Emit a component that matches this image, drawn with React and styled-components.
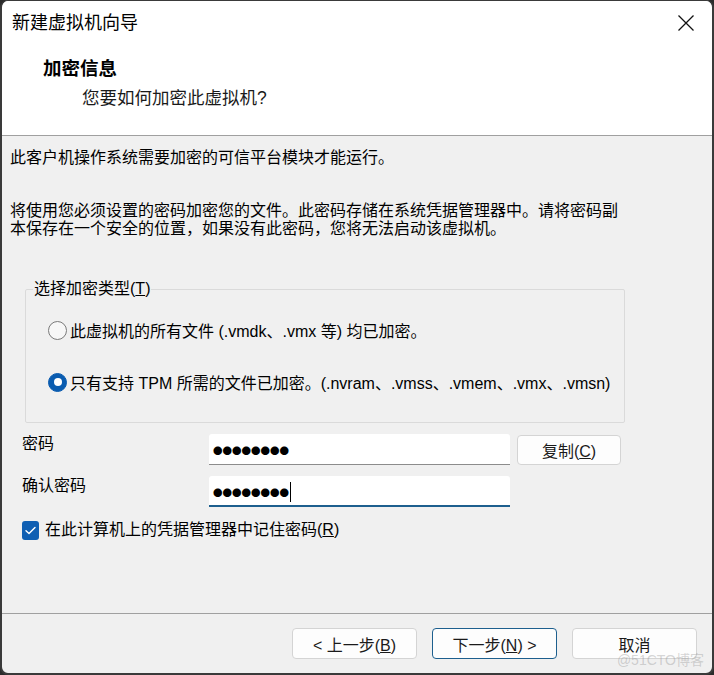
import * as React from "react";
import styled, { createGlobalStyle } from "styled-components";

const GlobalStyle = createGlobalStyle`
    html, body {
        margin: 0;
        padding: 0;
        background: #2b2b2b;
    }
    body {
        font-family: "Liberation Sans", "Noto Sans CJK SC", sans-serif;
        color: #000;
    }
`;

const Window =
    styled.div`
        position: relative;
        box-sizing: border-box;
        width: 714px;
        height: 675px;
        display: flex;
        flex-direction: column;
        background: #f0f0f0;
        border: 1px solid #3a3a3a;
        border-width: 1px 2px 2px 2px;
        border-radius: 8px;
        overflow: hidden;
    `;

const Top =
    styled.div`
        background: #fff;
        border-bottom: 1px solid #a0a0a0;
        height: 135px;
        box-sizing: border-box;
        flex: none;
    `;

const TitleBar =
    styled.div`
        height: 43px;
        display: flex;
        align-items: center;
        justify-content: space-between;
        padding: 0 16px 0 10px;
    `;

const Title =
    styled.span`
        font-size: 18px;
        line-height: 20px;
        padding-top: 1px;
    `;

const CloseButton =
    styled.span`
        display: flex;
        width: 18px;
        height: 18px;
        margin-right: 1px;
    `;

const Header =
    styled.div`
        padding: 13px 0 0 41px;
    `;

const Heading =
    styled.div`
        font-size: 18.5px;
        font-weight: 700;
        line-height: 24px;
    `;

const SubHeading =
    styled.div`
        font-size: 17.5px;
        line-height: 24px;
        margin: 5px 0 0 39px;
        color: #1a1a1a;
    `;

const Body =
    styled.div`
        flex: 1;
        padding: 12px 10px 0 8px;
        font-size: 16px;
    `;

const Paragraph =
    styled.p`
        margin: 0;
        line-height: ${p => p.$tight ? '18px' : '20px'};
        & + & {
            margin-top: 34px;
        }
    `;

const GroupBox =
    styled.fieldset`
        margin: 41px 0 0 15px;
        width: 600px;
        box-sizing: border-box;
        border: 1px solid #dadada;
        border-radius: 2px;
        padding: 19px 0 28px 22px;
    `;

const Legend =
    styled.legend`
        font-size: 16px;
        line-height: 20px;
        padding: 0 1px;
        margin-left: -15px;
    `;

const RadioRow =
    styled.div`
        display: flex;
        align-items: center;
        gap: 3px;
        height: 24px;
        & + & {
            margin-top: 28px;
        }
    `;

const RadioMark =
    styled.span`
        box-sizing: border-box;
        width: 19px;
        height: 19px;
        border-radius: 50%;
        flex: none;
        display: flex;
        align-items: center;
        justify-content: center;
        background: ${p => p.$checked ? '#0a5cb0' : '#f7f7f7'};
        border: 1px solid ${p => p.$checked ? '#0a5cb0' : '#7a7a7a'};

        &::after {
            content: '';
            display: ${p => p.$checked ? 'block' : 'none'};
            width: 8px;
            height: 8px;
            border-radius: 50%;
            background: #fff;
        }
    `;

const FormGrid =
    styled.div`
        display: grid;
        grid-template-columns: 180px 301px 104px;
        column-gap: 7px;
        row-gap: 11px;
        margin: 11px 0 0 12px;
        align-items: start;
    `;

const FieldLabel =
    styled.span`
        line-height: 20px;
    `;

const PasswordBox =
    styled.div`
        box-sizing: border-box;
        height: 31px;
        background: #fff;
        border-radius: 3px 3px 0 0;
        border-bottom: ${p => p.$focused ? '2px solid #1d5f8e' : '1px solid #8c8c8c'};
        display: flex;
        align-items: center;
        padding: ${p => p.$focused ? '2px 0 0 4px' : '1px 0 0 4px'};
    `;

const Dots =
    styled.span`
        font-family: "Noto Sans CJK SC", sans-serif;
        font-size: 9.5px;
        line-height: 12px;
    `;

const Caret =
    styled.span`
        width: 1px;
        height: 20px;
        background: #000;
        margin-left: 1px;
    `;

const CopyButton =
    styled.button`
        box-sizing: border-box;
        height: 30px;
        margin-top: 1px;
        font: inherit;
        font-size: 16px;
        background: #fdfdfd;
        border: 1px solid #d4d4d4;
        border-radius: 4px;
        color: #1a1a1a;
        padding: 0;
    `;

const CheckRow =
    styled.div`
        display: flex;
        align-items: center;
        gap: 6px;
        margin: 13px 0 0 12px;
        line-height: 20px;
    `;

const CheckMark =
    styled.span`
        width: 17px;
        height: 19px;
        border-radius: 3px;
        background: #0f5fb3;
        display: flex;
        align-items: center;
        justify-content: center;
    `;

const Footer =
    styled.div`
        box-sizing: border-box;
        flex: none;
        height: 60px;
        border-top: 1px solid #a0a0a0;
        display: flex;
        justify-content: flex-end;
        align-items: flex-start;
        gap: 15px;
        padding: 14px 15px 0 0;
    `;

const WizardButton =
    styled.button`
        box-sizing: border-box;
        width: 125px;
        height: 31px;
        font: inherit;
        font-size: 16px;
        color: #1a1a1a;
        background: #fdfdfd;
        border: 1px solid ${p => p.$primary ? '#1d5f8e' : '#d4d4d4'};
        border-radius: 4px;
        padding: 0;
    `;

const Watermark =
    styled.span`
        position: absolute;
        right: 8px;
        bottom: 4px;
        font-size: 14px;
        color: rgba(150, 150, 150, 0.4);
        pointer-events: none;
    `;

const CloseIcon = () =>
    <svg width="18" height="18" viewBox="0 0 18 18">
        <path d="M1.5 1.5 L16.5 16.5 M16.5 1.5 L1.5 16.5" stroke="#111" strokeWidth="1.3" fill="none" />
    </svg>;

const CheckIcon = () =>
    <svg width="13" height="13" viewBox="0 0 13 13">
        <path d="M2 6.8 L5 9.6 L11 3.4" stroke="#fff" strokeWidth="1.4" fill="none" strokeLinecap="round" strokeLinejoin="round" />
    </svg>;

const App = () => {
    const dots = "●●●●●●●●";

    return (
        <>
            <GlobalStyle />
            <Window>
                <Top>
                    <TitleBar>
                        <Title>新建虚拟机向导</Title>
                        <CloseButton><CloseIcon /></CloseButton>
                    </TitleBar>
                    <Header>
                        <Heading>加密信息</Heading>
                        <SubHeading>您要如何加密此虚拟机?</SubHeading>
                    </Header>
                </Top>

                <Body>
                    <Paragraph>此客户机操作系统需要加密的可信平台模块才能运行。</Paragraph>
                    <Paragraph $tight>
                        将使用您必须设置的密码加密您的文件。此密码存储在系统凭据管理器中。请将密码副<br />
                        本保存在一个安全的位置，如果没有此密码，您将无法启动该虚拟机。
                    </Paragraph>

                    <GroupBox>
                        <Legend>选择加密类型(<u>T</u>)</Legend>
                        <RadioRow>
                            <RadioMark />
                            <span>此虚拟机的所有文件 (.vmdk、.vmx 等) 均已加密。</span>
                        </RadioRow>
                        <RadioRow>
                            <RadioMark $checked />
                            <span>只有支持 TPM 所需的文件已加密。(.nvram、.vmss、.vmem、.vmx、.vmsn)</span>
                        </RadioRow>
                    </GroupBox>

                    <FormGrid>
                        <FieldLabel>密码</FieldLabel>
                        <PasswordBox><Dots>{dots}</Dots></PasswordBox>
                        <CopyButton>复制(<u>C</u>)</CopyButton>

                        <FieldLabel>确认密码</FieldLabel>
                        <PasswordBox $focused><Dots>{dots}</Dots><Caret /></PasswordBox>
                    </FormGrid>

                    <CheckRow>
                        <CheckMark><CheckIcon /></CheckMark>
                        <span>在此计算机上的凭据管理器中记住密码(<u>R</u>)</span>
                    </CheckRow>
                </Body>

                <Footer>
                    <WizardButton>&lt; 上一步(<u>B</u>)</WizardButton>
                    <WizardButton $primary>下一步(<u>N</u>) &gt;</WizardButton>
                    <WizardButton>取消</WizardButton>
                </Footer>

                <Watermark>@51CTO博客</Watermark>
            </Window>
        </>
    );
};

export default App;
